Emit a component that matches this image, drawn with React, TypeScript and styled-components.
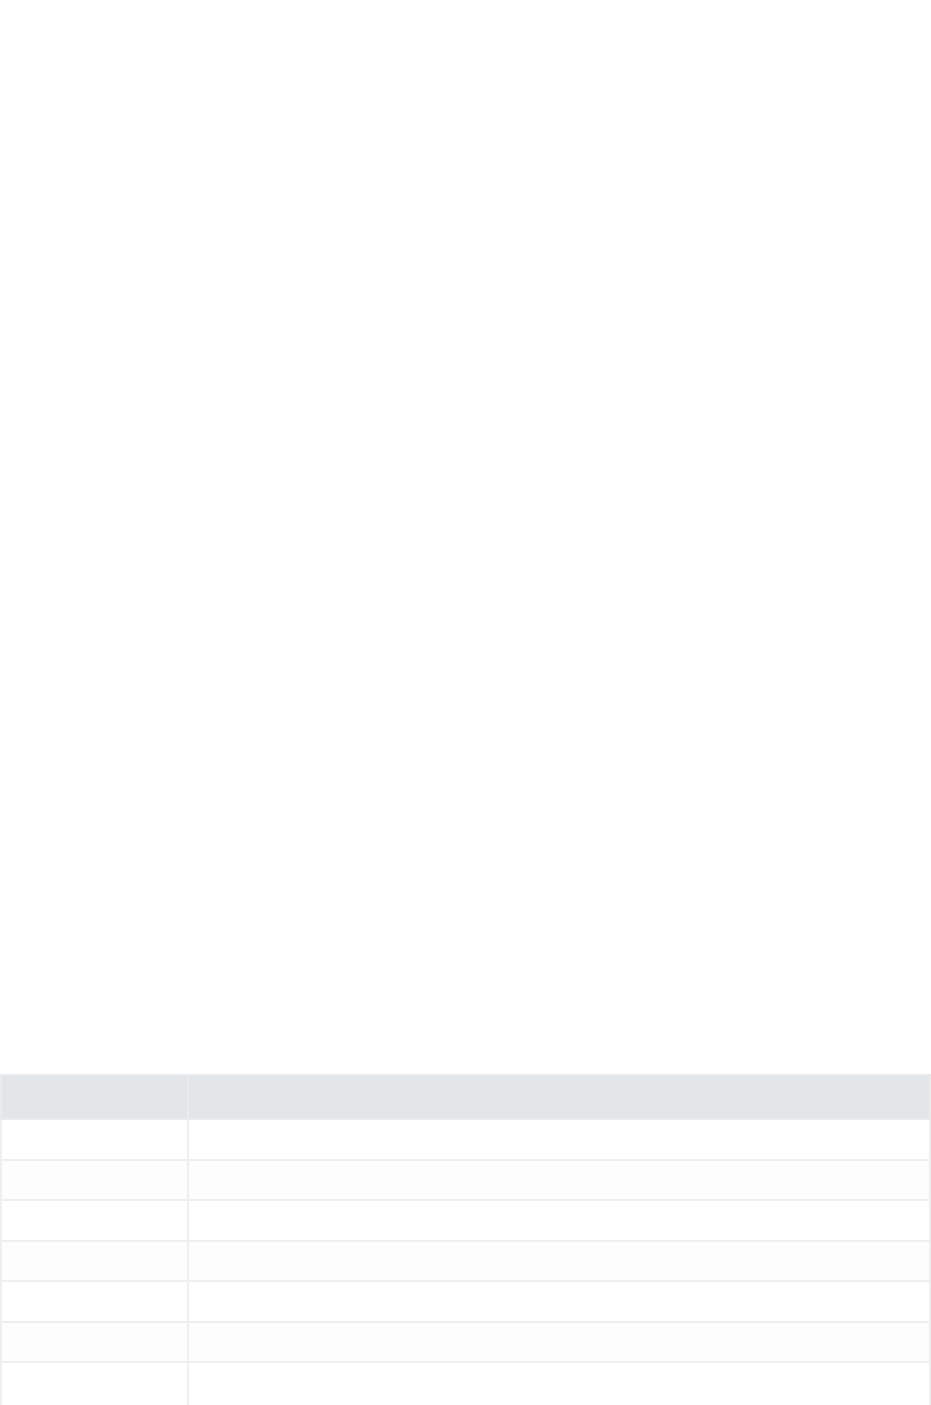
import React from "react";
import styled, { createGlobalStyle } from "styled-components";

const GlobalStyle = createGlobalStyle`
  html, body {
    margin: 0;
    padding: 0;
    background: #ffffff;
    font-family: "Liberation Sans", Arial, sans-serif;
  }
`;

const rows = Array.from({ length: 7 }, (_, i) => i);

function App() {
  return (
    <>
      <GlobalStyle />
      <Page>
        <Grid>
          <colgroup>
            <col style={{ width: 187 }} />
            <col />
          </colgroup>
          <thead>
            <tr>
              <HeadCell />
              <HeadCell />
            </tr>
          </thead>
          <tbody>
            {rows.map((r) => (
              <Row key={r}>
                <Cell />
                <Cell />
              </Row>
            ))}
          </tbody>
        </Grid>
      </Page>
    </>
  );
}

const Page = styled.div`
  width: 931px;
  padding-top: 1074px;
  height: 331px;
  overflow: hidden;
`;

const Grid = styled.table`
  width: 100%;
  border-collapse: collapse;
  table-layout: fixed;
  border: 2px solid #ebebeb;
`;

const HeadCell = styled.th`
  height: 42px;
  padding: 0;
  background: #e3e6e8;
  border: 2px solid #ebebeb;
`;

const Row = styled.tr`
  &:nth-child(even) td {
    background: #fdfdfd;
  }
  &:last-child td {
    height: 64px;
  }
`;

const Cell = styled.td`
  height: 38.5px;
  padding: 0;
  background: #ffffff;
  border: 2px solid #efefef;
`;

export default App;
